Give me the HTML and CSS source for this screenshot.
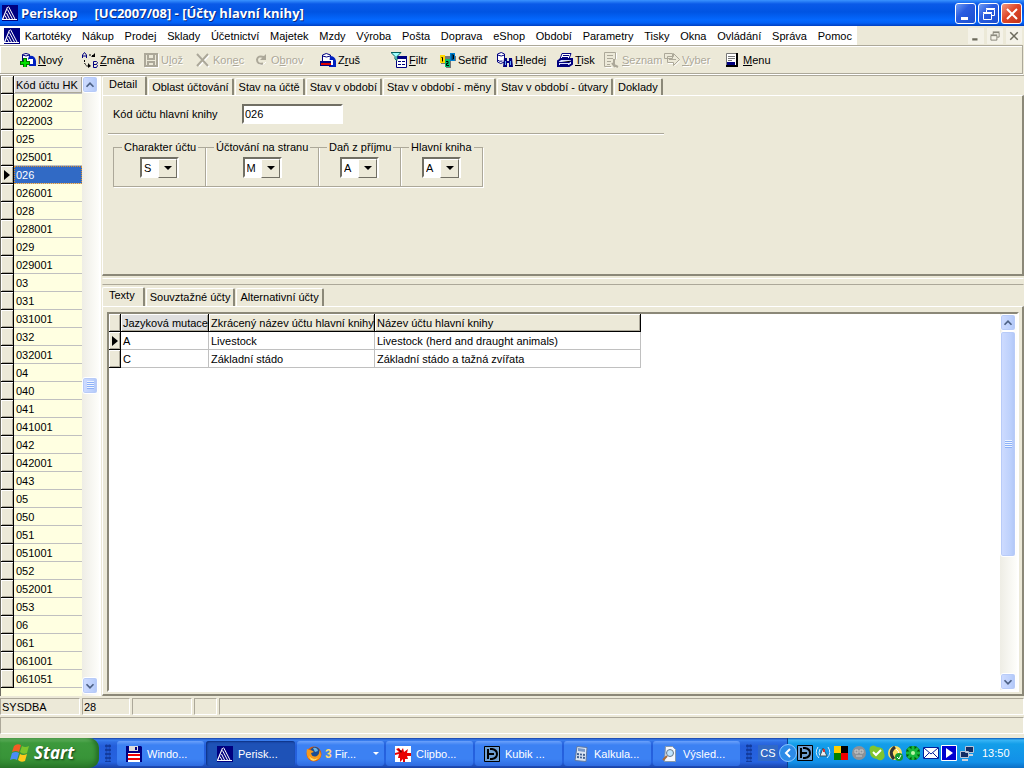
FILE: index.html
```html
<!DOCTYPE html>
<html lang="cs">
<head>
<meta charset="utf-8">
<title>Periskop [UC2007/08] - [Účty hlavní knihy]</title>
<link rel="stylesheet" href="styles.css">
</head>
<body>
<svg class="defs" aria-hidden="true">
  <defs>
    <symbol id="logo" viewBox="0 0 16 16"><path fill="#000080" d="M0 0h16v16H0z"/><path fill="#fff" d="M5 2h1L1 15H0v-1z"/><path fill="none" stroke="#fff" d="M6.500 1.500l7 13.500M5.500 4.500L11 15M4.500 8L8 15M3 10.500L5.500 15"/><path stroke="#fff" d="M1 14.500h14"/></symbol>
    <symbol id="newdb" viewBox="0 0 16 16"><path fill="#fff" stroke="#000080" d="M2.500 2.500q3.500-2 7 0v8h-7z"/><path fill="none" stroke="#000080" d="M2.500 3q3.500 2 7 0"/><path fill="#0020c0" d="M9 4q6-1 7 5v5H9l1-5-2-2z"/><path fill="#fff" d="M9 7h4v5H9z"/><path stroke="#007000" stroke-width="4" d="M5 6v9M0 11h10"/><path stroke="#00e000" stroke-width="2" d="M5 7v8M1 11h8"/></symbol>
    <symbol id="change" viewBox="0 0 16 16"><path fill="none" stroke="#000080" d="M.5 6V3L2.500.5 4.500 3v3M.5 4h4M11.500 15.500v-6h3l1 1-1 2h-3M14.500 12.500l1 1-1 2h-3"/><path fill="none" stroke="#000" stroke-dasharray="2 1" d="M7 3h3l2 2M2.500 8v3l2 3h3"/><path fill="#000" d="M9 5h4V1zM6 11v5l3-2z"/></symbol>
    <symbol id="save" viewBox="0 0 16 16"><path fill="none" stroke="#fff" d="M2 15.500h13.500V2"/><path fill="none" stroke="#aca899" stroke-width="2" d="M2 2h12v12H2zM5 2v5h6V2M5 14v-4h6v4"/></symbol>
    <symbol id="cancel" viewBox="0 0 16 16"><path stroke="#fff" stroke-width="2" d="M3 3l11 12M14 3L4 14"/><path stroke="#aca899" stroke-width="2" d="M2 2l11 12M13 2L2 14"/></symbol>
    <symbol id="refresh" viewBox="0 0 16 16"><path fill="none" stroke="#fff" d="M5 11q4 4 8-1"/><path fill="none" stroke="#aca899" stroke-width="2" d="M11 5Q5 3 4 7.500q0 5 6 4"/><path fill="#aca899" d="M13 2v6H7z"/></symbol>
    <symbol id="deldb" viewBox="0 0 16 16"><path fill="#fff" stroke="#000080" d="M2.500 3q3.500-3 8 0v8h-8z"/><path fill="none" stroke="#000080" d="M2.500 4q4 2 8 0"/><path fill="#0020c0" d="M10 4q5 0 6 5v6H9z"/><path fill="#fff" d="M9 8h4v5H9z"/><path fill="#000080" d="M0 9h11v5H0z"/><path fill="#e00000" d="M1 11h10v2H1z"/></symbol>
    <symbol id="filter" viewBox="0 0 16 16"><path fill="#fff" stroke="#000080" d="M5.500 4.500h10v11h-10z"/><path fill="#000080" d="M5 4h11v3H5zM7 9h3v1H7zM11 9h3v1h-3zM7 12h3v1H7zM11 12h3v1h-3z"/><path fill="#9ff" stroke="#006060" d="M0 .5h10L6 4.500v4L4 7V4.500z"/></symbol>
    <symbol id="sort" viewBox="0 0 16 16"><path fill="#777" d="M1 4h15v5h-5v7H6v-4H1z"/><path fill="#ffd800" d="M0 3h5v8H0z"/><path fill="#00c070" d="M5 7h5v8H5z"/><path fill="#0080d0" d="M10 1h5v8h-5z"/><path fill="none" stroke="#000" d="M1.500 5.500h1v4M6 9.500h2v2H6.500v2H9M11.500 3h2v4h-2M11.500 5h2"/></symbol>
    <symbol id="search" viewBox="0 0 16 16"><path fill="#fff" stroke="#000080" d="M.5 2q4-3 7 0v8q-4 3-7 0z"/><path fill="none" stroke="#000080" d="M.5 3q4 2 7 0M.5 8q2 2 5 1"/><path fill="#000080" d="M7 6h3v3h2V6h3l1 9h-4v-4h-2v4H6z"/><path stroke="#6af" d="M8.500 9v4M13.500 9v4"/></symbol>
    <symbol id="print" viewBox="0 0 16 16"><path fill="#fff" stroke="#000080" d="M5 1.500h9L12 7H3z"/><path stroke="#000080" d="M6 3.500h6M5 5.500h6"/><path fill="#d8e0ff" stroke="#000080" stroke-width="2" d="M1 9l3-2h11v5l-3 2H1z"/><path stroke="#000080" d="M1 10.500h11l3-2M3 12.500h8"/></symbol>
    <symbol id="list" viewBox="0 0 16 16"><path fill="none" stroke="#aca899" d="M7 14.500H.5V.5h11v7M3 3.500h6M3 6.500h6M3 9.500h4M3 12.500h3"/><path fill="none" stroke="#fff" d="M1.500 15.500h7M12.500 1v6"/><path fill="none" stroke="#aca899" stroke-width="2" d="M10 7v6l4 2M8 11l3 4"/></symbol>
    <symbol id="select" viewBox="0 0 16 16"><path fill="#ece9d8" stroke="#aca899" d="M.5 1.500h8v5h-8zM3.500 4.500h6v-3l6 6-6 6v-3h-6z"/><path stroke="#aca899" d="M5 7.500h7"/><path stroke="#fff" d="M4 11.500h5M10.500 14l5-5"/></symbol>
    <symbol id="menu" viewBox="0 0 16 16"><path fill="#fff" stroke="#777" d="M1.500 1.500h11v13h-11z"/><path fill="none" stroke="#000" stroke-width="2" d="M12 1v13H1"/><path stroke="#777" d="M3 4.500h7M3 6.500h7M3 8.500h4"/><path fill="#000080" d="M2 10h8v3H2z"/></symbol>
    <symbol id="up" viewBox="0 0 16 16"><path fill="none" stroke="#4d6185" stroke-width="2" d="M4 10l4-4 4 4"/></symbol>
    <symbol id="down" viewBox="0 0 16 16"><path fill="none" stroke="#4d6185" stroke-width="2" d="M4 6l4 4 4-4"/></symbol>
    <symbol id="w-min" viewBox="0 0 16 16"><path fill="currentColor" d="M3 11h7v3H3z"/></symbol>
    <symbol id="w-res" viewBox="0 0 16 16"><path fill="none" stroke="currentColor" d="M5.500 6V3.500h8v6H11M2.500 7.500h8v6h-8zM5 2.500h9M2 6.500h9"/></symbol>
    <symbol id="w-close" viewBox="0 0 16 16"><path stroke="currentColor" stroke-width="2" d="M3 3l10 10M13 3L3 13"/></symbol>
    <symbol id="flag" viewBox="0 0 20 20"><path fill="#f35c24" d="M4 3q3-3 7-1L9 9Q6 7 2 9z"/><path fill="#7ac52c" d="M12 3q3 2 7 0l-2 7q-4 2-7-1z"/><path fill="#4b8df8" d="M2 10q4-2 7 0l-2 7q-3-2-7 0z"/><path fill="#ffc91c" d="M10 11q3 2 7 0l-2 7q-4 2-7-1z"/></symbol>
    <symbol id="floppy" viewBox="0 0 16 16"><path fill="#000080" d="M0 0h15l1 1v15H0z"/><path fill="#ddd" d="M3 0h9v5H3z"/><path fill="#000080" d="M9 1h2v3H9z"/><path fill="#fff" d="M2 7h12v9H2z"/><path fill="#f00000" d="M2 8h12v2H2zM2 12h12v2H2z"/></symbol>
    <symbol id="fox" viewBox="0 0 16 16"><circle cx="8" cy="8" r="7.500" fill="#d95b08"/><circle cx="9" cy="6" r="5" fill="#1c4d93"/><path fill="#69b4e8" d="M7 2q4-1 5 3L9 6z"/><path fill="#f79a1c" d="M1 3l3 1q2 0 4 2L5 7q1 5 6 3 3-2 2-6 4 5 0 9-6 4-11-1Q0 8 1 3z"/><path fill="#ffdf6c" d="M3 10q4 5 9 2-3 4-7 2z"/></symbol>
    <symbol id="splat" viewBox="0 0 16 16"><path fill="#fff" d="M0 0h16v16H0z"/><path fill="#e80000" d="M8 2l1 4 4-3-1 4h4v3h-4l1 3h-3v3H8v-3l-3 3v-4H3l1-4-4 1V7l4-1-3-3 3-1 2 3z"/><path fill="#600" d="M3 3l4 2-1 2z"/></symbol>
    <symbol id="dkey" viewBox="0 0 16 16"><path fill="#6f9fd2" stroke="#000" d="M.5.5h15v15H.5z"/><path fill="none" stroke="#000" stroke-width="2" d="M6 3h2q5 1 5 5t-5 5H6M3 8h7M4 3v10"/></symbol>
    <symbol id="calc" viewBox="0 0 16 16"><path fill="#dbe6f4" stroke="#6078a0" d="M4 .5l10 1-1 14-11-1z"/><path fill="#7898c8" d="M5 2l7 1v3L5 5z"/><path stroke="#406090" stroke-width="2" stroke-dasharray="2 1" d="M4 8l8 1M4 11l8 1"/></symbol>
    <symbol id="doc" viewBox="0 0 16 16"><path fill="#f5f8ff" stroke="#89a" d="M3.500.5h7l3 3v12h-11z"/><circle cx="8" cy="7" r="3.500" fill="#bfe4ff" stroke="#678"/><path stroke="#a76b38" stroke-width="2" d="M5 10l-4 4"/></symbol>
    <symbol id="radio" viewBox="0 0 16 16"><path fill="none" stroke="#d5ecff" d="M3 2q-4 6 1 11M13 2q4 6-1 11M5 4q-2 4 0 7"/><path fill="#eee" stroke="#356" d="M8 3l4 8H5z"/><path fill="#d33" d="M8 4h2v3H8z"/></symbol>
    <symbol id="squares" viewBox="0 0 16 16"><path fill="#ffd000" d="M1 1h7v7H1z"/><path d="M8 1h7v7H8z"/><path fill="#008000" d="M1 8h7v7H1z"/><path fill="#f00000" d="M8 8h7v7H8z"/></symbol>
    <symbol id="grayball" viewBox="0 0 16 16"><circle cx="8" cy="8" r="7" fill="#8d9298"/><path fill="none" stroke="#ccc" d="M4 5h3v3H4zM9 5h3v3H9zM5 11h6"/></symbol>
    <symbol id="skype" viewBox="0 0 16 16"><path fill="#80c52d" d="M1 2q3-3 7 0 7 0 7 6 2 5-2 7-3 1-5-1-7-1-7-7-1-2 0-5z"/><path fill="none" stroke="#fff" stroke-width="2" d="M4 7l3 3 5-5"/></symbol>
    <symbol id="phone" viewBox="0 0 16 16"><circle cx="8" cy="8" r="7" fill="#ffe164"/><path fill="none" stroke="#333" stroke-width="3" d="M8 2Q1 7 7 14"/><path fill="none" stroke="#fff" d="M9 4q3 2 3 5"/><circle cx="12" cy="12" r="4" fill="#159a30"/><path fill="none" stroke="#fff" d="M10 12l2 2 2-4"/></symbol>
    <symbol id="clover" viewBox="0 0 16 16"><path stroke="#005800" stroke-width="5" d="M8 1v14M1 8h14M3 3l10 10M13 3L3 13"/><path stroke="#17b83d" stroke-width="3" d="M8 1v14M1 8h14M3 3l10 10M13 3L3 13"/><circle cx="8" cy="8" r="2" fill="#bff5a8"/></symbol>
    <symbol id="mail" viewBox="0 0 16 16"><path fill="#fff" stroke="#00209c" d="M.5 2.500h15v11H.5z"/><path fill="none" stroke="#00209c" d="M1 3l7 6 7-6M1 13l5-5M15 13l-5-5"/></symbol>
    <symbol id="play" viewBox="0 0 16 16"><path fill="#0000d0" stroke="#fff" d="M.5.5h15v15H.5z"/><path fill="#fff" d="M5 3l7 5-7 5z"/></symbol>
    <symbol id="net" viewBox="0 0 16 16"><path fill="#132d64" stroke="#b9c6d8" d="M6.500 1.500h8v6h-8zM1.500 6.500h8v6h-8z"/><path stroke="#cbd3dd" stroke-width="2" d="M3 15h6M10 10h4"/></symbol>
  </defs>
</svg>

<div class="app">
  <header class="titlebar">
    <svg class="ico"><use href="#logo"/></svg>
    <h1><span>Periskop</span><span>[UC2007/08] - [Účty hlavní knihy]</span></h1>
    <div class="winbtns">
      <button aria-label="Minimalizovat"><svg class="ico"><use href="#w-min"/></svg></button>
      <button aria-label="Obnovit"><svg class="ico"><use href="#w-res"/></svg></button>
      <button class="close" aria-label="Zavřít"><svg class="ico"><use href="#w-close"/></svg></button>
    </div>
  </header>

  <nav class="menubar">
    <div class="menus">
      <svg class="ico"><use href="#logo"/></svg>
      <button>Kartotéky</button><button>Nákup</button><button>Prodej</button><button>Sklady</button><button>Účetnictví</button><button>Majetek</button><button>Mzdy</button><button>Výroba</button><button>Pošta</button><button>Doprava</button><button>eShop</button><button>Období</button><button>Parametry</button><button>Tisky</button><button>Okna</button><button>Ovládání</button><button>Správa</button><button>Pomoc</button>
    </div>
    <div class="mdibtns">
      <button aria-label="Minimalizovat okno"><svg class="mini"><use href="#w-min"/></svg></button>
      <button aria-label="Obnovit okno"><svg class="mini"><use href="#w-res"/></svg></button>
      <button aria-label="Zavřít okno"><svg class="mini"><use href="#w-close"/></svg></button>
    </div>
  </nav>

  <div class="toolbar" role="toolbar">
    <button><svg class="ico"><use href="#newdb"/></svg><span><u>N</u>ový</span></button>
    <button><svg class="ico"><use href="#change"/></svg><span><u>Z</u>měna</span></button>
    <button disabled><svg class="ico"><use href="#save"/></svg><span>U<u>l</u>ož</span></button>
    <button disabled><svg class="ico"><use href="#cancel"/></svg><span>Kon<u>e</u>c</span></button>
    <button disabled><svg class="ico"><use href="#refresh"/></svg><span>O<u>b</u>nov</span></button>
    <button><svg class="ico"><use href="#deldb"/></svg><span>Z<u>r</u>uš</span></button>
    <button><svg class="ico"><use href="#filter"/></svg><span><u>F</u>iltr</span></button>
    <button><svg class="ico"><use href="#sort"/></svg><span>Setřiď</span></button>
    <button><svg class="ico"><use href="#search"/></svg><span><u>H</u>ledej</span></button>
    <button><svg class="ico"><use href="#print"/></svg><span><u>T</u>isk</span></button>
    <button disabled><svg class="ico"><use href="#list"/></svg><span><u>S</u>eznam</span></button>
    <button disabled><svg class="ico"><use href="#select"/></svg><span><u>V</u>yber</span></button>
    <button><svg class="ico"><use href="#menu"/></svg><span><u>M</u>enu</span></button>
  </div>

  <main class="work">
    <aside class="codes">
      <table class="grid codegrid">
        <thead><tr><th></th><th class="sorted">Kód účtu HK</th></tr></thead>
        <tbody>
          <tr><th></th><td>022002</td></tr>
          <tr><th></th><td>022003</td></tr>
          <tr><th></th><td>025</td></tr>
          <tr><th></th><td>025001</td></tr>
          <tr class="current"><th></th><td>026</td></tr>
          <tr><th></th><td>026001</td></tr>
          <tr><th></th><td>028</td></tr>
          <tr><th></th><td>028001</td></tr>
          <tr><th></th><td>029</td></tr>
          <tr><th></th><td>029001</td></tr>
          <tr><th></th><td>03</td></tr>
          <tr><th></th><td>031</td></tr>
          <tr><th></th><td>031001</td></tr>
          <tr><th></th><td>032</td></tr>
          <tr><th></th><td>032001</td></tr>
          <tr><th></th><td>04</td></tr>
          <tr><th></th><td>040</td></tr>
          <tr><th></th><td>041</td></tr>
          <tr><th></th><td>041001</td></tr>
          <tr><th></th><td>042</td></tr>
          <tr><th></th><td>042001</td></tr>
          <tr><th></th><td>043</td></tr>
          <tr><th></th><td>05</td></tr>
          <tr><th></th><td>050</td></tr>
          <tr><th></th><td>051</td></tr>
          <tr><th></th><td>051001</td></tr>
          <tr><th></th><td>052</td></tr>
          <tr><th></th><td>052001</td></tr>
          <tr><th></th><td>053</td></tr>
          <tr><th></th><td>06</td></tr>
          <tr><th></th><td>061</td></tr>
          <tr><th></th><td>061001</td></tr>
          <tr><th></th><td>061051</td></tr>
        </tbody>
      </table>
      <div class="scroll mid">
        <button aria-label="Nahoru"><svg class="ico"><use href="#up"/></svg></button>
        <div class="track"><div class="thumb"><i></i></div></div>
        <button aria-label="Dolů"><svg class="ico"><use href="#down"/></svg></button>
      </div>
    </aside>

    <div class="panels">
      <section class="panel detail">
        <div class="tabs" role="tablist">
          <button role="tab" aria-selected="true">Detail</button>
          <button role="tab">Oblast účtování</button>
          <button role="tab">Stav na účtě</button>
          <button role="tab">Stav v období</button>
          <button role="tab">Stav v období - měny</button>
          <button role="tab">Stav v období - útvary</button>
          <button role="tab">Doklady</button>
        </div>
        <form class="page">
          <div class="code-row">
            <label for="code">Kód účtu hlavní knihy</label>
            <input id="code" type="text" value="026">
          </div>
          <div class="groups">
            <fieldset class="g1"><legend>Charakter účtu</legend><span class="combo"><select aria-label="Charakter účtu"><option>S</option></select></span></fieldset>
            <fieldset class="g2"><legend>Účtování na stranu</legend><span class="combo"><select aria-label="Účtování na stranu"><option>M</option></select></span></fieldset>
            <fieldset class="g3"><legend>Daň z příjmu</legend><span class="combo"><select aria-label="Daň z příjmu"><option>A</option></select></span></fieldset>
            <fieldset class="g3"><legend>Hlavní kniha</legend><span class="combo"><select aria-label="Hlavní kniha"><option>A</option></select></span></fieldset>
          </div>
        </form>
      </section>
      <div class="splitter"></div>
      <section class="panel texts">
        <div class="tabs" role="tablist">
          <button role="tab" aria-selected="true">Texty</button>
          <button role="tab">Souvztažné účty</button>
          <button role="tab">Alternativní účty</button>
        </div>
        <div class="page">
          <div class="sunken">
            <div class="sheet">
              <table class="grid textgrid">
                <colgroup><col class="c0"><col class="c1"><col class="c2"><col class="c3"></colgroup>
                <thead><tr><th></th><th class="sorted">Jazyková mutace</th><th>Zkrácený název účtu hlavní knihy</th><th>Název účtu hlavní knihy</th></tr></thead>
                <tbody>
                  <tr class="active"><th></th><td>A</td><td>Livestock</td><td>Livestock (herd and draught animals)</td></tr>
                  <tr><th></th><td>C</td><td>Základní stádo</td><td>Základní stádo a tažná zvířata</td></tr>
                </tbody>
              </table>
            </div>
            <div class="scroll">
              <button aria-label="Nahoru"><svg class="ico"><use href="#up"/></svg></button>
              <div class="track"><div class="thumb"><i></i></div></div>
              <button aria-label="Dolů"><svg class="ico"><use href="#down"/></svg></button>
            </div>
          </div>
        </div>
      </section>
    </div>
  </main>

  <footer class="status">
    <div class="cells"><span>SYSDBA</span><span>28</span><span></span><span></span><span></span></div>
    <div class="hint"></div>
  </footer>

  <div class="taskbar">
    <button class="start"><svg><use href="#flag"/></svg>Start</button>
    <i class="grip"></i>
    <div class="tasks">
      <button><svg class="ico"><use href="#floppy"/></svg><span>Windo...</span></button>
      <button class="pressed"><svg class="ico"><use href="#logo"/></svg><span>Perisk...</span></button>
      <button class="stack"><svg class="ico"><use href="#fox"/></svg><b>3</b><span>Fir...</span></button>
      <button><svg class="ico"><use href="#splat"/></svg><span>Clipbo...</span></button>
      <button><svg class="ico"><use href="#dkey"/></svg><span>Kubik ...</span></button>
      <button><svg class="ico"><use href="#calc"/></svg><span>Kalkula...</span></button>
      <button><svg class="ico"><use href="#doc"/></svg><span>Výsled...</span></button>
    </div>
    <i class="grip"></i>
    <span class="lang">CS</span>
    <div class="tray">
      <button class="expand" aria-label="Zobrazit skryté ikony"><svg viewBox="0 0 18 18"><circle cx="9" cy="9" r="8.500" fill="#2c8be8" stroke="#8cc8ff"/><path fill="none" stroke="#fff" stroke-width="2" d="M11 5L7 9l4 4"/></svg></button>
      <svg class="ico"><use href="#dkey"/></svg>
      <svg class="ico"><use href="#radio"/></svg>
      <svg class="ico"><use href="#squares"/></svg>
      <svg class="ico"><use href="#grayball"/></svg>
      <svg class="ico"><use href="#skype"/></svg>
      <svg class="ico"><use href="#phone"/></svg>
      <svg class="ico"><use href="#clover"/></svg>
      <svg class="ico"><use href="#mail"/></svg>
      <svg class="ico"><use href="#play"/></svg>
      <svg class="ico"><use href="#net"/></svg>
      <time>13:50</time>
    </div>
  </div>
</div>
</body>
</html>
```
FILE: styles.css
```css
* { box-sizing: border-box; }
body {
  margin: 0;
  background: #ece9d8;
  color: #000;
  font: 11px/14px "Liberation Sans", Arial, sans-serif;
}
button, input, select { font: inherit; color: inherit; margin: 0; }
button { padding: 0; border: 0; background: none; white-space: nowrap; }
.defs { position: absolute; width: 0; height: 0; }
.ico { width: 16px; height: 16px; flex: none; display: block; }
.mini { width: 12px; height: 12px; display: block; }
.app { min-height: 100vh; display: flex; flex-direction: column; }

/* Title bar */
.titlebar {
  height: 26px;
  display: flex;
  align-items: center;
  padding: 0 2px;
  background: linear-gradient(#3a93ff 0, #0a5ae8 4px, #0054e3 12px, #0468ff 20px, #0260f5 23px, #003ec0 26px);
  color: #fff;
}
.titlebar h1 {
  flex: 1;
  margin: 0 0 0 3px;
  display: flex;
  gap: 17px;
  font: bold 13px/16px "Open Sans", "Noto Sans", sans-serif;
  text-shadow: 1px 1px #0a2a80;
}
.winbtns { display: flex; gap: 2px; }
.winbtns button {
  width: 21px;
  height: 21px;
  padding: 2px;
  border: 1px solid #fff;
  border-radius: 3px;
  background: linear-gradient(135deg, #6f9cf5, #2a5de0 40%, #1c4fd0);
}
.winbtns .close { background: linear-gradient(135deg, #f09a80, #e0482a 45%, #c0331a); }

/* Menu bar */
.menubar { height: 19px; display: flex; justify-content: space-between; }
.menus {
  width: 857px;
  padding: 0 5px 0 4px;
  display: flex;
  align-items: center;
  justify-content: space-between;
  background: #fff;
}
.menus .ico { margin-right: -6px; }
.mdibtns { display: flex; gap: 3px; align-items: center; padding-right: 2px; color: #6c6a5c; }
.mdibtns button { width: 16px; height: 16px; padding: 2px; background: #f4f2e8; }

/* Toolbar */
.toolbar {
  height: 29px;
  margin: 0 1px 1px 0;
  padding-left: 20px;
  border: 1px solid #aca899;
  border-width: 1px 1px 1px 0;
  box-shadow: inset 0 1px #fff, 0 1px #fff, inset 1px 0 #fff;
  display: grid;
  grid-template-columns: 62px 61px 52px 58px 67px 71px 49px 57px 60px 47px 60px 61px 60px;
  align-items: center;
}
.toolbar button { display: flex; align-items: center; gap: 2px; }
.toolbar button:disabled { color: #aca899; text-shadow: 1px 1px #fff; }

/* Work area */
.work { flex: 1; display: flex; border-top: 1px solid #aca899; }
.codes {
  display: flex;
  width: 101px;
  border-left: 1px solid #716f64;
  border-right: 2px solid #fff;
  background: linear-gradient(90deg, #ffffe1 82px, #fff 82px);
}
.grid { border-collapse: separate; border-spacing: 0; table-layout: fixed; align-self: flex-start; }
.grid th, .grid td {
  height: 18px;
  padding: 0 2px;
  font-weight: normal;
  text-align: left;
  white-space: nowrap;
  overflow: hidden;
}
.grid th {
  background: #ece9d8;
  border: 1px solid #000;
  border-width: 0 1px 1px 0;
  box-shadow: inset 1px 1px #fff, inset -1px -1px #aca899;
}
.grid td { border: 1px solid #c0c0c0; border-width: 0 1px 1px 0; }
.grid .sorted { background: #dfdfdf; }
.current th::before, .active th::before {
  content: "";
  display: block;
  width: 0;
  margin-left: 1px;
  border: 5px solid transparent;
  border-left: 6px solid #000;
  border-right: 0;
}
.codegrid { width: 82px; }
.codegrid th:first-child { width: 13px; }
.codegrid td { background: #ffffe1; border-right: 0; }
.codegrid thead .sorted { border-right: 0; border-bottom-color: #c0c0c0; }
.codegrid .current td { background: #316ac5; color: #fff; outline: 1px dotted #d89030; outline-offset: -1px; }
.textgrid { width: 532px; }
.textgrid td { background: #fff; }
.c0 { width: 12px; }
.c1 { width: 88px; }
.c2 { width: 166px; }
.c3 { width: 266px; }

/* Scroll bars */
.scroll { width: 17px; display: flex; flex-direction: column; background: linear-gradient(90deg, #eeede5, #fefefb); }
.scroll button, .thumb {
  width: 16px;
  border: 1px solid #fff;
  border-radius: 3px;
  background: linear-gradient(90deg, #cfdcff, #bcd0fc 70%, #b0c6f6);
  box-shadow: inset 0 0 0 1px #b8cbf8;
}
.scroll button { height: 17px; padding: 0; display: grid; place-items: center; }
.scroll button .ico { width: 14px; height: 14px; }
.track { flex: 1; }
.thumb { height: 66%; display: grid; place-items: center; }
.thumb i { width: 7px; height: 8px; background: repeating-linear-gradient(#eef4fe 0 1px, #8cb0f8 1px 2px); }
.mid { padding-bottom: 2px; }
.mid .track { display: grid; align-items: center; }
.mid .thumb { height: 17px; }

/* Right side */
.panels { flex: 1; min-width: 0; display: flex; flex-direction: column; padding-left: 1px; }
.panel { display: flex; flex-direction: column; }
.tabs { display: flex; align-items: flex-end; height: 19px; }
.tabs button {
  height: 17px;
  padding: 0 3px;
  margin-right: 1px;
  border-left: 1px solid #fff;
  border-right: 2px solid #8b8878;
  border-top: 1px solid #fff;
  border-radius: 2px 2px 0 0;
}
.tabs button[aria-selected] { height: 19px; padding: 0 8px 4px 6px; }
.page { border-top: 1px solid #fff; border-left: 1px solid #fff; }
.detail .page {
  height: 181px;
  padding: 8px 0 0 10px;
  border-right: 2px solid #8b8878;
  border-bottom: 2px solid #8b8878;
}
.code-row {
  display: flex;
  align-items: center;
  width: 556px;
  height: 30px;
  margin-left: -5px;
  padding: 0 0 9px 5px;
  border-bottom: 1px solid #aca899;
  box-shadow: 0 1px #fff;
}
.code-row label { width: 129px; }
.code-row input, .combo {
  border: 2px solid;
  border-color: #716f64 #fff #fff #716f64;
  background: #fff;
}
.code-row input { width: 101px; height: 20px; padding: 0 1px; }
.groups { display: flex; padding: 6px 0 0 1px; }
.groups fieldset {
  min-width: 0;
  height: 47px;
  margin: 0 0 0 -1px;
  padding: 0;
  border: 1px solid #aca899;
  box-shadow: 1px 1px #fff;
  text-align: center;
}
.groups legend { margin-left: 8px; padding: 0 2px; text-align: left; }
.groups .g1 { width: 93px; }
.groups .g2 { width: 114px; }
.groups .g3 { width: 83px; }
.combo { position: relative; display: inline-block; width: 39px; height: 21px; margin-top: 3px; text-align: left; }
.combo select { appearance: none; width: 100%; height: 17px; padding: 0 2px; border: 0; border-radius: 0; background: none; display: block; }
.combo::before {
  content: "";
  position: absolute;
  right: 0;
  top: 0;
  width: 17px;
  height: 17px;
  background: #ece9d8;
  border: 1px solid;
  border-color: #fff #716f64 #716f64 #fff;
  pointer-events: none;
}
.combo::after {
  content: "";
  position: absolute;
  right: 5px;
  top: 7px;
  border: 4px solid transparent;
  border-top-color: #000;
  border-bottom: 0;
  pointer-events: none;
}
.splitter { height: 7px; margin: 2px 0; border: 1px solid; border-color: #fff transparent #aca899; }
.texts { flex: 1; }
.texts .tabs button { height: 18px; padding-bottom: 2px; }
.texts .tabs button[aria-selected] { height: 19px; padding-bottom: 4px; }
.texts .page {
  flex: 1;
  display: flex;
  padding: 5px 3px 2px 4px;
  border-right: 2px solid #8b8878;
  border-bottom: 2px solid #8b8878;
}
.sunken {
  flex: 1;
  display: flex;
  border: 2px solid;
  border-color: #8b8878 #fff #fff #8b8878;
  background: #fff;
}
.sheet { flex: 1; }

/* Status bar */
.status { display: flex; flex-direction: column; gap: 2px; padding: 2px 0 4px; }
.cells { display: grid; grid-template-columns: 80px 48px 60px 23px 1fr; gap: 2px; }
.cells span, .hint {
  height: 17px;
  padding: 2px 1px;
  line-height: 13px;
  border: 1px solid;
  border-color: #aca899 #fff #fff #aca899;
}

/* Task bar */
.taskbar {
  height: 30px;
  display: flex;
  align-items: stretch;
  color: #fff;
  background: linear-gradient(#1941a5 0, #3a80f0 2px, #2f6fe4 4px, #245edb 8px, #2663e0 24px, #1941a5 30px);
}
.start {
  width: 99px;
  padding: 0 0 0 10px;
  display: flex;
  align-items: center;
  gap: 4px;
  border-radius: 0 10px 10px 0;
  background: linear-gradient(#6fbf6c 0, #3c993c 5px, #389438 20px, #2a7a2a 30px);
  box-shadow: inset -3px 0 4px #256c25;
  font: italic bold 17px/20px "Open Sans", "Liberation Sans", sans-serif;
  text-shadow: 1px 1px 2px #143c14;
}
.start svg { width: 20px; height: 20px; }
.grip { width: 6px; margin: 6px 6px; background: radial-gradient(circle, #123a9c 1px, transparent 2px) 0 0 / 3px 4px; }
.tasks { flex: 1; display: flex; gap: 2px; padding: 3px 0 2px; }
.tasks button {
  flex: 1 1 0;
  min-width: 0;
  display: flex;
  align-items: center;
  gap: 5px;
  padding-left: 9px;
  border-radius: 3px;
  background: linear-gradient(#6ba1fb, #3c81f3 4px, #3c81f3 18px, #2f6be0);
}
.tasks .pressed { background: #1e52b7; box-shadow: inset 1px 1px 2px #0c2f80; padding-left: 11px; }
.tasks .stack { gap: 3px; }
.tasks .stack::after { content: ""; margin: 0 5px 0 auto; border: 3px solid transparent; border-top-color: #fff; border-bottom: 0; }
.tasks b { color: #ffd873; font-size: 12px; }
.lang { align-self: center; margin: 0 9px 0 0; padding: 1px 2px; background: #3169c6; width: 20px; text-align: center; }
.tray {
  display: flex;
  align-items: center;
  gap: 2px;
  width: 237px;
  background: linear-gradient(#0c59b9 0, #39b5f5 2px, #139ee9 6px, #1290e8 24px, #0b6ec5 30px);
  border-left: 1px solid #0a3f90;
}
.expand { width: 18px; height: 18px; margin: 0 -2px 0 -9px; }
.expand svg { width: 18px; height: 18px; display: block; }
.tray time { margin-left: 5px; }
```
